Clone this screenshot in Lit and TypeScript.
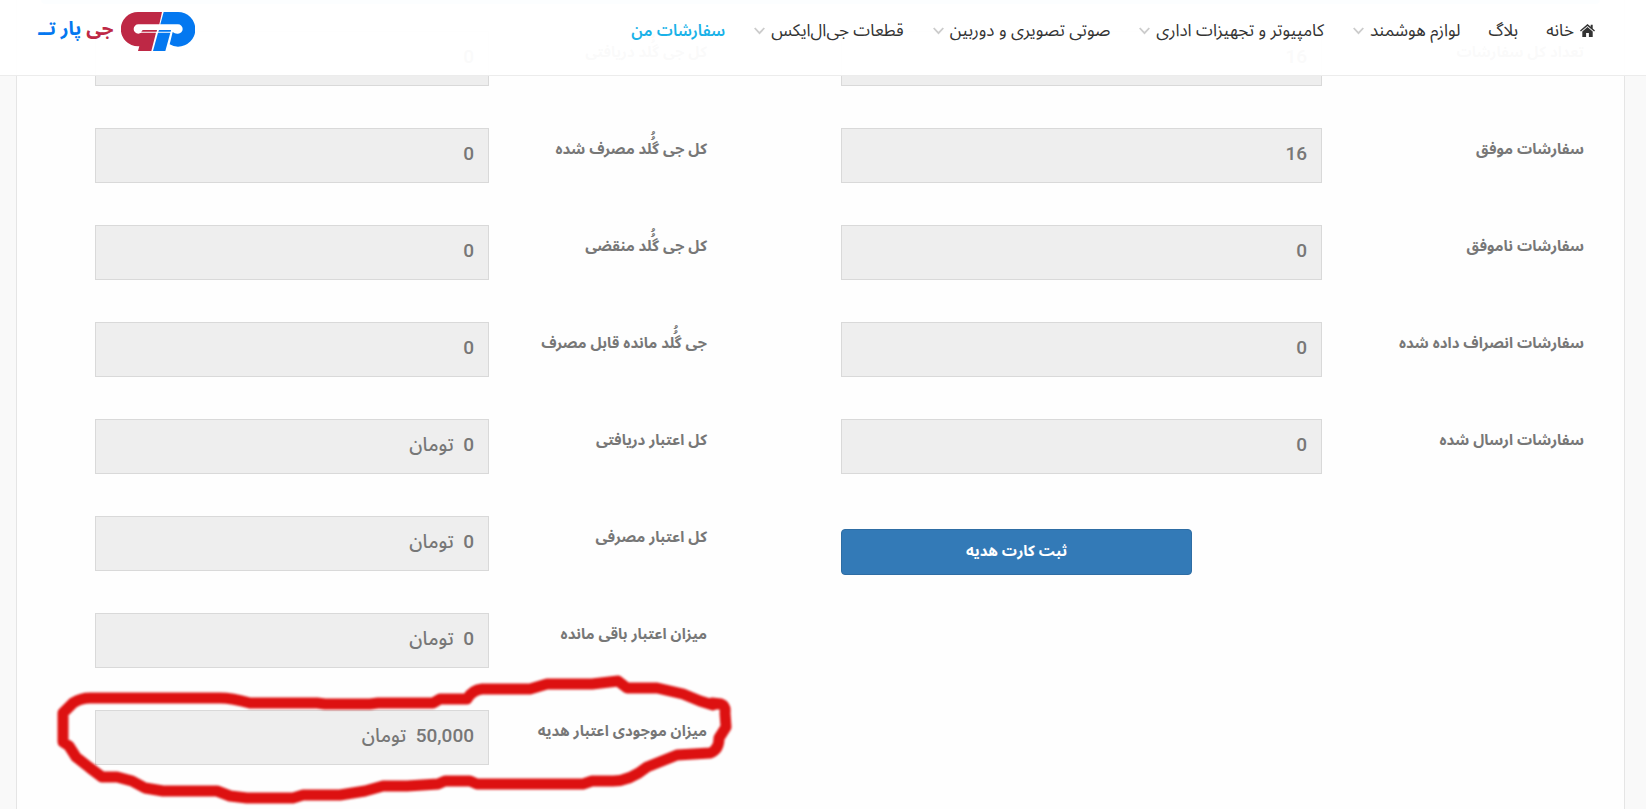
import { LitElement, html, css, svg, nothing } from "lit";
import { customElement, property } from "lit/decorators.js";

interface Field { id: string; label: string; value: string; }
interface NavItem { label: string; menu?: boolean; home?: boolean; active?: boolean; }

const NAV: NavItem[] = [
  { label: "خانه", home: true },
  { label: "بلاگ" },
  { label: "لوازم هوشمند", menu: true },
  { label: "کامپیوتر و تجهیزات اداری", menu: true },
  { label: "صوتی تصویری و دوربین", menu: true },
  { label: "قطعات جی‌ال‌ایکس", menu: true },
  { label: "سفارشات من", active: true },
];

const ORDERS: Field[] = [
  { id: "orders-total", label: "تعداد کل سفارشات", value: "16" },
  { id: "orders-ok", label: "سفارشات موفق", value: "16" },
  { id: "orders-failed", label: "سفارشات ناموفق", value: "0" },
  { id: "orders-cancelled", label: "سفارشات انصراف داده شده", value: "0" },
  { id: "orders-sent", label: "سفارشات ارسال شده", value: "0" },
];

const CREDIT: Field[] = [
  { id: "gold-received", label: "کل جی گُُلد دریافتی", value: "0" },
  { id: "gold-spent", label: "کل جی گُُلد مصرف شده", value: "0" },
  { id: "gold-expired", label: "کل جی گُُلد منقضی", value: "0" },
  { id: "gold-left", label: "جی گُُلد مانده قابل مصرف", value: "0" },
  { id: "credit-received", label: "کل اعتبار دریافتی", value: "0  تومان" },
  { id: "credit-spent", label: "کل اعتبار مصرفی", value: "0  تومان" },
  { id: "credit-left", label: "میزان اعتبار باقی مانده", value: "0  تومان" },
  { id: "gift-balance", label: "میزان موجودی اعتبار هدیه", value: "50,000  تومان" },
];

@customElement("site-header")
class SiteHeader extends LitElement {
  static styles = css`
    :host {
      position: absolute;
      inset: 0 0 auto 0;
      z-index: 2;
      display: flex;
      justify-content: space-between;
      align-items: flex-start;
      height: 75px;
      padding: 0 51px 0 38px;
      background: rgba(255, 255, 255, 0.96);
      border-bottom: 1px solid #ececec;
    }
    .nav {
      display: flex;
      gap: 28px;
      margin: 0;
      padding: 0;
      padding-top: 15px;
      list-style: none;
    }
    .link {
      display: flex;
      align-items: center;
      gap: 6px;
      color: #333;
      font-size: 17px;
      line-height: 32px;
      text-decoration: none;
      white-space: nowrap;
    }
    .menu { margin-left: 1px; }
    .active { color: #1ab2e8; font-size: 16px; font-weight: 600; }
    .brand {
      display: flex;
      gap: 8px;
      padding-top: 12px;
      text-decoration: none;
    }
    .name {
      font-size: 19px;
      line-height: 35px;
      font-weight: 700;
      white-space: nowrap;
      color: #0478f0;
    }
    .red { color: #be2845; }
  `;

  render() {
    return html`
      <ul class="nav">
        ${NAV.map((n) => html`<li>
          <a class="link ${n.active ? "active" : ""} ${n.menu ? "menu" : ""}" href="#">
            ${n.home ? html`<svg width="15" height="14" viewBox="0 0 15 14" fill="#333" aria-hidden="true">
              <path d="M7.5 0 0 6.6l.9 1L7.500 1.900l6.600 5.700.9-1-2.300-2V.8h-2v2z"/>
              <path d="M7.500 3.100 2.300 7.600V13h3.800V9h2.800v4h3.800V7.600z"/>
            </svg>` : nothing}
            <span>${n.label}</span>
            ${n.menu ? html`<svg width="11" height="8" viewBox="0 0 11 8" fill="none" stroke="#ccc" stroke-width="1.800" aria-hidden="true">
              <path d="m.7 1 4.800 5.200L10.300 1"/>
            </svg>` : nothing}
          </a></li>`)}
      </ul>
      <a class="brand" href="#">
        <svg width="74" height="39" viewBox="369 36 222 117" aria-hidden="true">
          <g fill="#be2845">
            <path d="M420 36H492L484 73H421A13 13 0 0 0 421 101L430 98H474L460 153H420L424 139H420A51.500 51.500 0 0 1 420 36Z"/>
            <path d="M434 90H477L476 95H430Z"/>
          </g>
          <g fill="#0478f0">
            <path d="M497 36H540A52 52 0 0 1 540 140Q526 140 515 133L524 96Q531 102 540 101A13.500 13.500 0 0 0 540 73H487Z"/>
            <path d="M480 98H517L502 153H465Z"/>
            <path d="M483 90H519L518 95H481Z"/>
          </g>
        </svg>
        <span class="name"><span class="red">جی</span> پار تــ</span>
      </a>
    `;
  }
}

@customElement("app-root")
class AppRoot extends LitElement {
  @property({ attribute: false }) orders = ORDERS;
  @property({ attribute: false }) credit = CREDIT;

  static styles = css`
    :host {
      display: block;
      position: relative;
      box-sizing: border-box;
      min-height: 100vh;
      padding: 0 21px 0 16px;
      direction: rtl;
      background: #f9f9f9;
      color: #777;
      font-family: "Noto Sans Arabic", "Noto Sans", sans-serif;
    }
    .card {
      box-sizing: border-box;
      min-height: 100vh;
      padding: 0 24px;
      background: #fefefe;
      border: solid #e5e5e5;
      border-width: 0 1px;
    }
    .strip {
      height: 4px;
      background: #b8d4f4;
      border-radius: 0 0 4px 4px;
    }
    .form {
      display: grid;
      grid-template-columns: 743fr 612fr;
      column-gap: 134px;
      align-items: start;
      padding: 27px 16px 40px 54px;
    }
    .group { display: grid; row-gap: 42px; }
    .row { display: grid; align-items: start; }
    .orders .row { grid-template-columns: 262fr 481fr; }
    .credit .row { grid-template-columns: 218fr 394fr; }
    .label {
      padding-top: 5px;
      font-size: 15px;
      line-height: 32px;
      font-weight: 700;
    }
    .field {
      box-sizing: border-box;
      width: 100%;
      height: 55px;
      padding: 0 14px 4px;
      border: 1px solid #d9d9d9;
      border-radius: 0;
      background: #eee;
      color: #777;
      font-family: Roboto, "Noto Sans Arabic", sans-serif;
      font-size: 19px;
      font-weight: 500;
      outline: 0;
    }
    .action { padding-top: 13px; }
    .button {
      grid-column: 2;
      justify-self: end;
      width: 73%;
      height: 46px;
      padding: 0 12px 2px;
      border: 1px solid #2e6da4;
      border-radius: 4px;
      background: #337ab7;
      color: #fff;
      font-family: inherit;
      font-size: 15px;
      font-weight: 700;
    }
    .mark {
      position: absolute;
      left: 50px;
      top: 670px;
      z-index: 1;
      pointer-events: none;
      filter: blur(1px);
    }
  `;

  private row(f: Field) {
    return html`<div class="row">
      <label class="label" for=${f.id}>${f.label}</label>
      <input class="field" id=${f.id} type="text" readonly .value=${f.value} />
    </div>`;
  }

  render() {
    return html`
      <site-header></site-header>
      <main class="card">
        <div class="strip"></div>
        <form class="form">
          <div class="group orders">
            ${this.orders.map((f) => this.row(f))}
            <div class="row action"><button class="button" type="button">ثبت کارت هدیه</button></div>
          </div>
          <div class="group credit">${this.credit.map((f) => this.row(f))}</div>
        </form>
      </main>
      <svg class="mark" width="690" height="139" viewBox="50 670 690 139" fill="none"
        stroke="#dd1111" stroke-width="11" stroke-linejoin="round" stroke-linecap="round" aria-hidden="true">
        ${svg`<path d="M90 698H220Q232 698 250 703H317L325 704H370L378 703H433L440 699H467Q472 690 482 689H530L547 684H592L618 681L627 688H657L683 694L700 701L713 705L712 703L721 704Q726 706 725 713L726 727L719 738Q719 750 710 753L677 755L647 767Q630 781 613 781H592L583 784H477L470 781H445L438 784L407 786H383L365 791L340 795H303L293 798H247L230 796L217 791H163L145 788L132 781L117 777H102L90 768L76 757L69 746L63 742V713L73 703Q81 698 90 698Z"/>`}
      </svg>
    `;
  }
}
